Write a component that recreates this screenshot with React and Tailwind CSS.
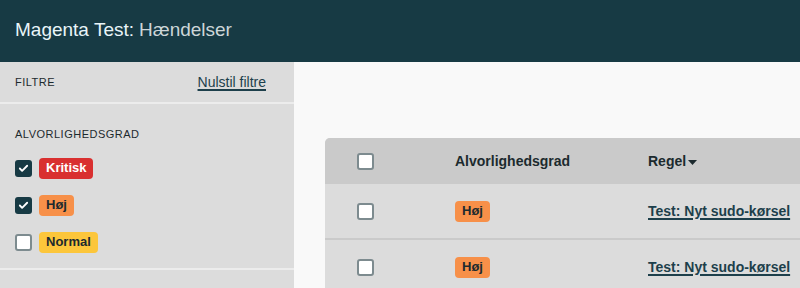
import { Check } from "lucide-react";

const badgeStyles = {
  Kritisk: "bg-[#d93030] text-white",
  "Høj": "bg-[#f79049] text-[#1c2a2e]",
  Normal: "bg-[#fcc63b] text-[#1c2a2e]",
};

function Box({ checked }) {
  if (checked) {
    return (
      <span className="flex h-[17px] w-[17px] items-center justify-center rounded-[3px] bg-[#173a44]">
        <Check className="h-[11px] w-[11px] text-white" strokeWidth={4} />
      </span>
    );
  }
  return <span className="block h-[17px] w-[17px] rounded-[3px] border-2 border-[#7d8b8f] bg-white" />;
}

function Badge({ label }) {
  return (
    <span className={`inline-flex h-[21px] items-center rounded-[4px] px-[7px] text-[13px] font-bold ${badgeStyles[label]}`}>
      {label}
    </span>
  );
}

const filters = [
  { label: "Kritisk", checked: true },
  { label: "Høj", checked: true },
  { label: "Normal", checked: false },
];

const rows = [
  { sev: "Høj", rule: "Test: Nyt sudo-kørsel" },
  { sev: "Høj", rule: "Test: Nyt sudo-kørsel" },
];

export default function App() {
  return (
    <div className="h-[288px] w-[800px] overflow-hidden bg-[#f9f9f9] font-['Liberation_Sans',Arial,sans-serif] text-[#1c2a2e]">
      {/* header */}
      <div className="flex h-[62px] items-center bg-[#173a44] px-[15px] pb-[2px] text-[19px]">
        <span className="text-[#e9f5f9]">Magenta Test:</span>
        <span className="ml-[5px] text-[#cdd6d9]">Hændelser</span>
      </div>

      <div className="flex">
        {/* sidebar */}
        <aside className="h-[226px] w-[294px] shrink-0 bg-[#dcdcdc]">
          <div className="flex h-[42px] items-center justify-between border-b-2 border-[#ececec] px-[15px] pr-[28px]">
            <span className="text-[11px] uppercase tracking-[0.5px]">Filtre</span>
            <a href="#" className="text-[14px] text-[#1d3f4b] underline decoration-[1.5px] underline-offset-2">
              Nulstil filtre
            </a>
          </div>
          <div className="border-b-2 border-[#ececec] px-[15px] pt-[22px] pb-[15px]">
            <div className="text-[11px] uppercase tracking-[0.5px]">Alvorlighedsgrad</div>
            <div className="mt-[15px] flex flex-col gap-[16px]">
              {filters.map((f) => (
                <label key={f.label} className="flex items-center gap-[7px]">
                  <Box checked={f.checked} />
                  <Badge label={f.label} />
                </label>
              ))}
            </div>
          </div>
        </aside>

        {/* content */}
        <main className="min-w-0 flex-1 overflow-hidden pl-[31px] pt-[76px]">
          <div className="w-[640px] rounded-tl-[5px] bg-[#dcdcdc]">
            <div className="grid h-[46px] grid-cols-[98px_193px_1fr] items-center rounded-tl-[5px] bg-[#cacaca] text-[14px] font-bold">
              <div className="px-8">
                <Box checked={false} />
              </div>
              <div className="px-8">Alvorlighedsgrad</div>
              <div className="flex items-center px-8">
                Regel
                <svg width="9" height="5" viewBox="0 0 9 5" className="ml-[2px] mt-[2px]">
                  <path d="M0 0h9L4.5 5z" fill="#1c2a2e" />
                </svg>
              </div>
            </div>
            {rows.map((r, i) => (
              <div
                key={i}
                className="grid h-[56px] grid-cols-[98px_193px_1fr] items-center border-b-2 border-[#cacaca] text-[14px]"
              >
                <div className="px-8">
                  <Box checked={false} />
                </div>
                <div className="px-8">
                  <Badge label={r.sev} />
                </div>
                <div className="whitespace-nowrap px-8">
                  <a href="#" className="font-bold text-[#1d3f4b] underline decoration-[1.5px] underline-offset-2">
                    {r.rule}
                  </a>
                </div>
              </div>
            ))}
          </div>
        </main>
      </div>
    </div>
  );
}
